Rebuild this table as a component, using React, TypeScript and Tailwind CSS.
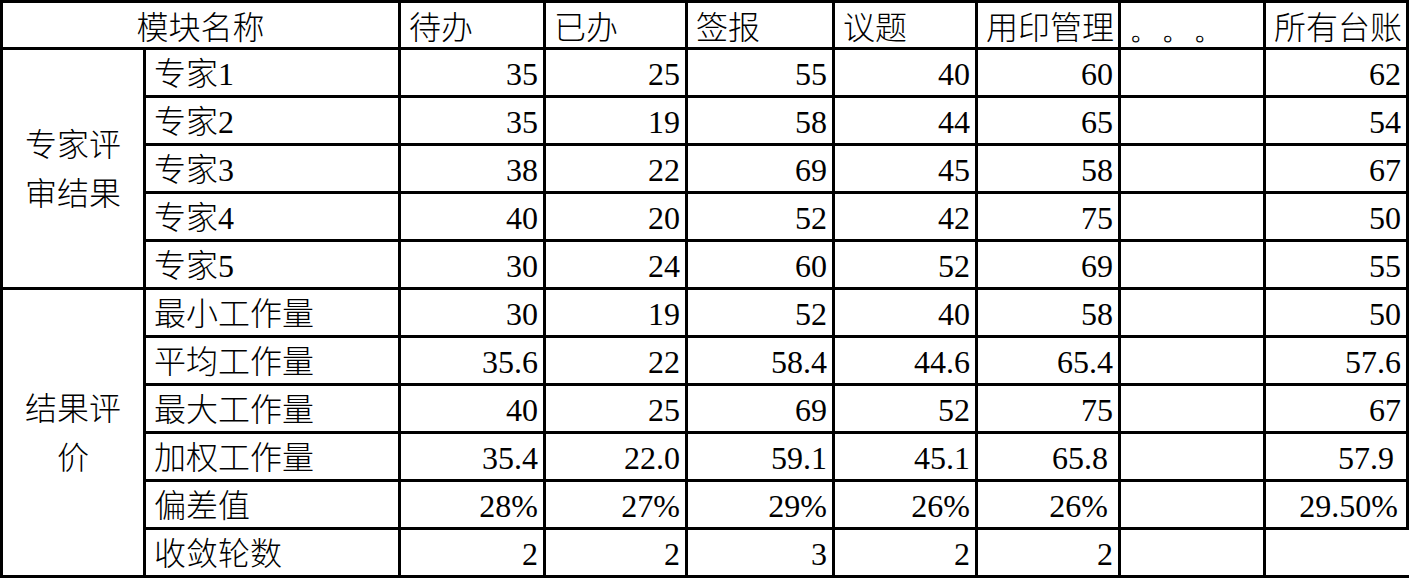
const headers = ["待办", "已办", "签报", "议题", "用印管理", "。。。", "所有台账"];

const groups = [
  {
    title: "专家评审结果",
    rows: [
      { label: "专家1", values: ["35", "25", "55", "40", "60", "", "62"] },
      { label: "专家2", values: ["35", "19", "58", "44", "65", "", "54"] },
      { label: "专家3", values: ["38", "22", "69", "45", "58", "", "67"] },
      { label: "专家4", values: ["40", "20", "52", "42", "75", "", "50"] },
      { label: "专家5", values: ["30", "24", "60", "52", "69", "", "55"] },
    ],
  },
  {
    title: "结果评价",
    rows: [
      { label: "最小工作量", values: ["30", "19", "52", "40", "58", "", "50"] },
      { label: "平均工作量", values: ["35.6", "22", "58.4", "44.6", "65.4", "", "57.6"] },
      { label: "最大工作量", values: ["40", "25", "69", "52", "75", "", "67"] },
      { label: "加权工作量", values: ["35.4", "22.0", "59.1", "45.1", "65.8", "", "57.9"] },
      { label: "偏差值", values: ["28%", "27%", "29%", "26%", "26%", "", "29.50%"] },
      { label: "收敛轮数", values: ["2", "2", "3", "2", "2", "", ""] },
    ],
  },
];

// a few values in the source sit a bit left of the others
const padFor = (value: string, col: number) => {
  if (col === 4 && (value === "65.8" || value === "26%")) return "pr-[10px]";
  if (value === "57.9") return "pr-[12px]";
  if (value === "29.50%") return "pr-[8px]";
  return "pr-[5px]";
};

const cell = "bg-white leading-[45px] whitespace-nowrap overflow-hidden";

export default function App() {
  return (
    <div className="w-[1409px] h-[578px] bg-white text-black font-['Liberation_Serif','Noto_Sans_CJK_SC',serif] text-[32px] font-light">
      <div className="grid h-full w-full grid-cols-[140px_252px_142px_139px_144px_140px_140px_142px_140px] grid-rows-[44px_repeat(11,45px)] gap-[3px] bg-black p-[3px]">
        <div className={`${cell} col-span-2 pt-[3px] text-center leading-[44px]`}>模块名称</div>
        {headers.map((h) => (
          <div key={h} className={`${cell} pl-2 pt-[3px] leading-[44px]`}>
            {h === "。。。" ? <span className="font-['Liberation_Serif']">{h}</span> : h}
          </div>
        ))}

        {groups.map((g, gi) => (
          <div key={g.title} className="contents">
            <div
              className={`col-start-1 flex items-center justify-center bg-white ${
                gi === 0 ? "row-start-2 row-span-5" : "row-start-7 row-span-6"
              }`}
            >
              <div className="w-[102px] pt-[3px] text-center leading-[49px]">{g.title}</div>
            </div>
            {g.rows.map((r, ri) => (
              <div key={r.label} className="contents">
                <div className={`${cell} col-start-2 pl-2 pt-[2px]`}>{r.label}</div>
                {r.values.map((v, ci) => {
                  const last = gi === 1 && ri === g.rows.length - 1 && ci === 6;
                  return (
                    <div
                      key={ci}
                      className={`${cell} pt-[2px] text-right ${padFor(v, ci)} ${last ? "mr-[-3px]" : ""}`}
                    >
                      {v}
                    </div>
                  );
                })}
              </div>
            ))}
          </div>
        ))}
      </div>
    </div>
  );
}
